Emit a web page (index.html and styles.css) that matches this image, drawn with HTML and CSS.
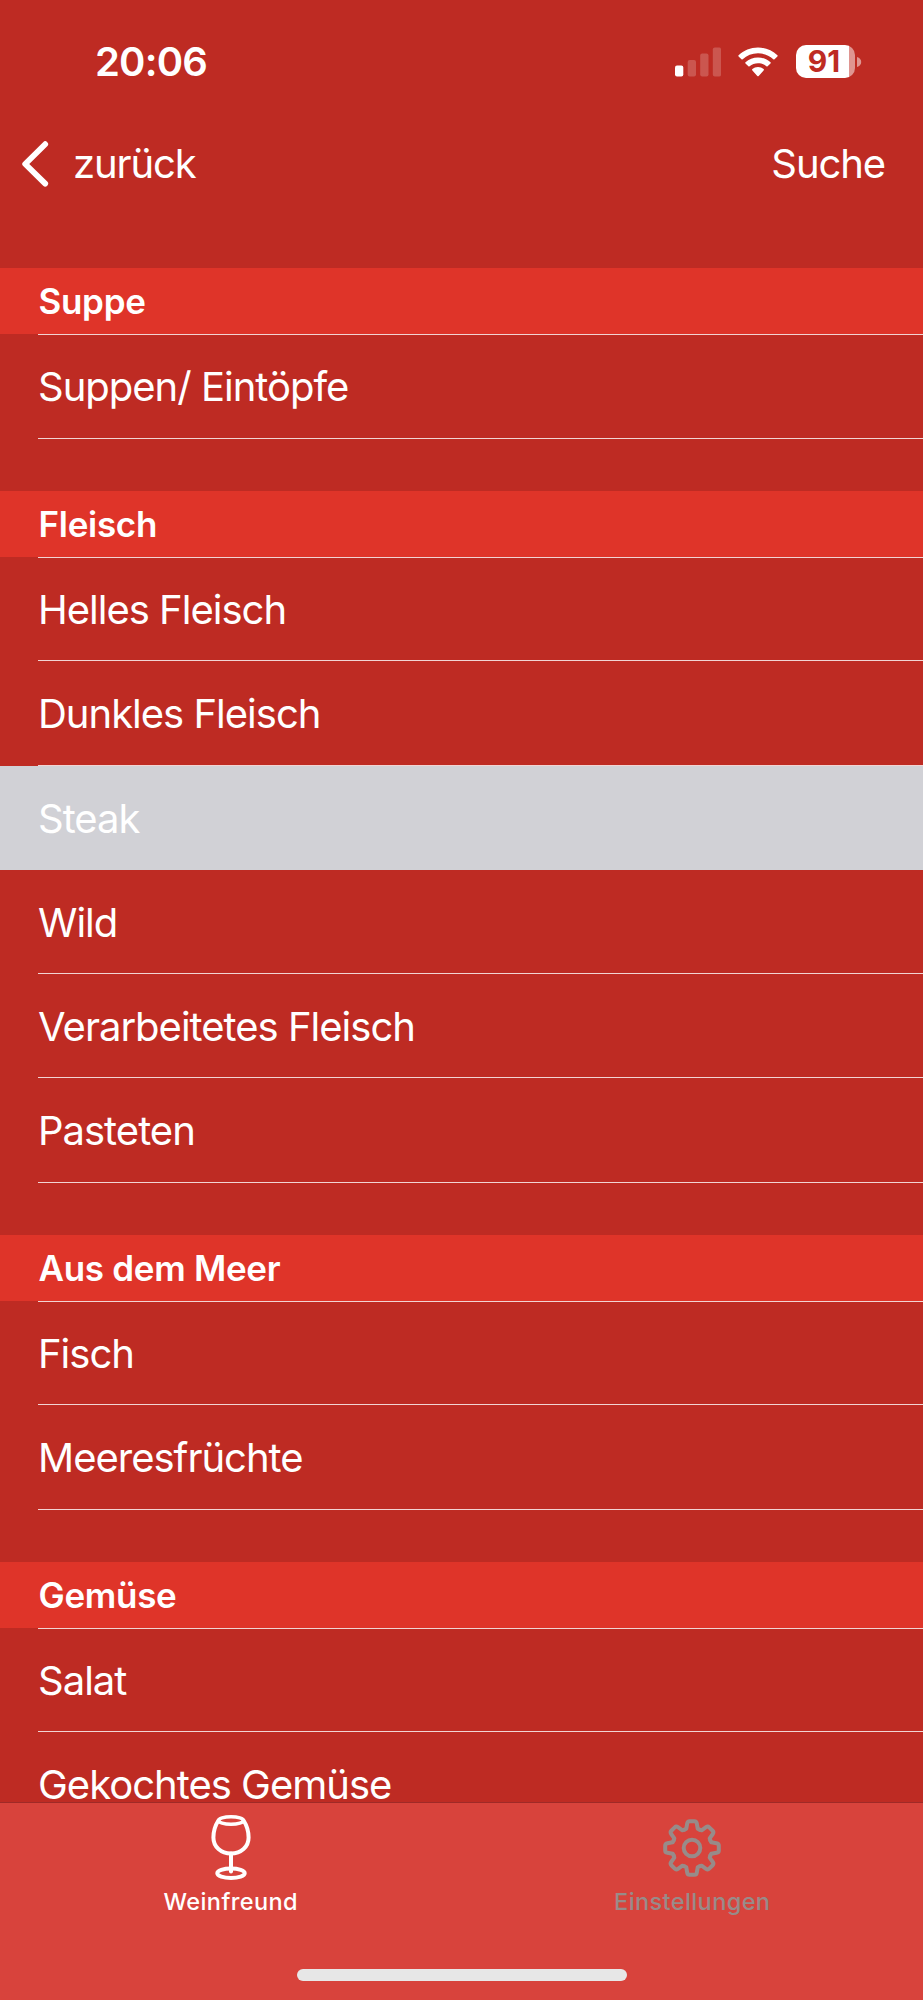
FILE: index.html
```html
<!DOCTYPE html>
<html lang="de">
<head>
    <meta charset="UTF-8">
    <meta name="viewport" content="width=device-width, initial-scale=1.0">
    <title>Weinfreund</title>
    <link rel="stylesheet" href="styles.css">
</head>
<body>

<div class="app">
    <div class="status-bar">
        <span class="time">20:06</span>
        <div class="status-icons">
            <svg class="signal" width="46" height="30" viewBox="0 0 46 30" fill="#fff">
                <rect x="0" y="18.5" width="8.3" height="11" rx="2"/>
                <g opacity="0.2">
                    <rect x="12.7" y="13" width="8.3" height="16.5" rx="2"/>
                    <rect x="25.2" y="6.6" width="8.3" height="22.9" rx="2"/>
                    <rect x="37.8" y="0.5" width="8.3" height="29" rx="2"/>
                </g>
            </svg>
            <svg class="wifi" width="40" height="30" viewBox="0 0 40 30" fill="#fff">
                <path d="M20 0.5C27.5 0.5 34.3 3.4 39.4 8.2Q40 8.8 39.4 9.4L36.5 12.2Q35.9 12.7 35.3 12.2C31.2 8.4 25.9 6.3 20 6.3S8.8 8.4 4.7 12.2Q4.1 12.7 3.5 12.2L0.6 9.4Q0 8.8 0.6 8.2C5.7 3.4 12.5 0.5 20 0.5Z"/>
                <path d="M20 10.4C24.8 10.4 29.2 12.2 32.5 15.2Q33.1 15.8 32.5 16.4L29.6 19.2Q29 19.8 28.4 19.2C26.1 17.3 23.2 16.2 20 16.2S13.9 17.3 11.6 19.2Q11 19.8 10.4 19.2L7.5 16.4Q6.9 15.8 7.5 15.2C10.8 12.2 15.2 10.4 20 10.4Z"/>
                <path d="M20 20.1C22.1 20.1 24.1 20.8 25.6 22.1Q26.3 22.7 25.6 23.4L20.7 28.9Q20 29.6 19.3 28.9L14.4 23.4Q13.7 22.7 14.4 22.1C15.9 20.8 17.9 20.1 20 20.1Z"/>
            </svg>
            <div class="battery">
                <span class="battery-level">91</span>
                <svg class="battery-nub" width="5" height="10" viewBox="0 0 5 10"><path d="M0 0Q4.2 1.3 4.2 5T0 10Z" fill="#fff"/></svg>
            </div>
        </div>
    </div>

    <div class="nav-bar">
        <a class="back">
            <svg width="28" height="46" viewBox="0 0 28 46" fill="none" stroke="#fff" stroke-width="5.8" stroke-linecap="round" stroke-linejoin="round">
                <path d="M23.2 3.2L3.2 23L23.2 42.6"/>
            </svg>
            <span class="back-label">zurück</span>
        </a>
        <a class="search">Suche</a>
    </div>

    <div class="list">
        <div class="section">
            <h2 class="section-title">Suppe</h2>
            <div class="row"><div class="row-label">Suppen/ Eintöpfe</div></div>
        </div>
        <div class="section">
            <h2 class="section-title">Fleisch</h2>
            <div class="row"><div class="row-label">Helles Fleisch</div></div>
            <div class="row"><div class="row-label">Dunkles Fleisch</div></div>
            <div class="row selected"><div class="row-label">Steak</div></div>
            <div class="row"><div class="row-label">Wild</div></div>
            <div class="row"><div class="row-label">Verarbeitetes Fleisch</div></div>
            <div class="row"><div class="row-label">Pasteten</div></div>
        </div>
        <div class="section">
            <h2 class="section-title">Aus dem Meer</h2>
            <div class="row"><div class="row-label">Fisch</div></div>
            <div class="row"><div class="row-label">Meeresfrüchte</div></div>
        </div>
        <div class="section">
            <h2 class="section-title">Gemüse</h2>
            <div class="row"><div class="row-label">Salat</div></div>
            <div class="row"><div class="row-label">Gekochtes Gemüse</div></div>
        </div>
    </div>

    <div class="tab-bar">
        <div class="tabs">
            <a class="tab active">
                <svg width="44" height="68" viewBox="-22 0 44 68" fill="none" stroke="currentColor" stroke-width="4" stroke-linecap="round" stroke-linejoin="round">
                    <ellipse cx="0" cy="6.5" rx="12.5" ry="3.8" stroke-width="3.4"/>
                    <path d="M-12.6 6.5C-15.5 11-17.6 16-17.6 23.5C-17.6 33-10 39.5-0 39.5S17.6 33 17.6 23.5C17.6 16 15.5 11 12.6 6.5"/>
                    <path d="M0 39.5V57.5"/>
                    <ellipse cx="0" cy="59.3" rx="13.7" ry="4.7"/>
                </svg>
                <span class="tab-label">Weinfreund</span>
            </a>
            <a class="tab">
                <svg width="60" height="68" viewBox="-30 -34 60 68" fill="none" stroke="currentColor" stroke-width="4" stroke-linecap="round" stroke-linejoin="round">
                    <defs>
                        <path id="tooth" d="M-7.6-18.3L-5.7-19.3L-4.8-24.6Q-4.4-26.8-2.4-26.8H2.4Q4.4-26.8 4.8-24.6L5.7-19.3L7.6-18.3"/>
                    </defs>
                    <use href="#tooth"/>
                    <use href="#tooth" transform="rotate(45)"/>
                    <use href="#tooth" transform="rotate(90)"/>
                    <use href="#tooth" transform="rotate(135)"/>
                    <use href="#tooth" transform="rotate(180)"/>
                    <use href="#tooth" transform="rotate(225)"/>
                    <use href="#tooth" transform="rotate(270)"/>
                    <use href="#tooth" transform="rotate(315)"/>
                    <circle r="8.3"/>
                </svg>
                <span class="tab-label">Einstellungen</span>
            </a>
        </div>
        <div class="home-indicator"></div>
    </div>
</div>

</body>
</html>
```
FILE: styles.css
```css
* {
    box-sizing: border-box;
}
body {
    margin: 0;
    background-color: #be2b23;
    color: #fff;
    font-family: Inter, 'Liberation Sans', sans-serif;
}
.app {
    display: flex;
    flex-direction: column;
    height: 2000px;
    overflow: hidden;
}
.status-bar {
    flex: none;
    display: flex;
    justify-content: space-between;
    height: 123px;
    padding: 0 61px 0 95px;
}
.time {
    font-size: 40px;
    font-weight: 600;
    letter-spacing: -0.8px;
    line-height: 123px;
}
.status-icons {
    display: flex;
    align-items: center;
    height: 123px;
}
.wifi {
    margin-left: 17px;
}
.battery {
    display: flex;
    align-items: center;
    margin-left: 18px;
}
.battery-level {
    width: 59px;
    height: 33px;
    border-radius: 10px;
    background: linear-gradient(to right, #fff 53px, #df9591 53px);
    color: #be2b23;
    font-size: 30px;
    font-weight: 700;
    line-height: 33px;
    text-align: center;
    padding-right: 3px;
}
.battery-nub {
    margin-left: 2px;
    opacity: 0.5;
}
.nav-bar {
    flex: none;
    display: flex;
    justify-content: space-between;
    align-items: center;
    height: 81px;
    padding: 0 38px 0 22px;
    font-size: 40px;
    letter-spacing: -1.1px;
}
.back {
    display: flex;
    align-items: center;
    gap: 23px;
}
.list {
    flex: 1;
    min-height: 0;
    overflow: hidden;
    padding-top: 64px;
}
.section {
    margin-bottom: 52.2px;
}
.section-title {
    margin: 0;
    height: 66.3px;
    padding-left: 38.5px;
    background-color: #df3429;
    font-size: 35px;
    font-weight: 600;
    letter-spacing: -0.3px;
    line-height: 66px;
}
.row {
    height: 104.25px;
    padding-left: 38px;
}
.row-label {
    height: 100%;
    border-bottom: 1px solid rgba(255, 255, 255, 0.8);
    font-size: 40px;
    letter-spacing: -1px;
    line-height: 106px;
}
.section-title + .row .row-label {
    border-top: 1px solid rgba(255, 255, 255, 0.8);
    line-height: 104px;
}
.row.selected {
    background-color: #d1d1d6;
}
.row.selected .row-label {
    border-bottom-color: transparent;
}
.tab-bar {
    flex: none;
    height: 198px;
    border-top: 1px solid #9f2a27;
    background-color: #d8433c;
}
.tabs {
    display: flex;
    height: 166px;
}
.tab {
    flex: 1;
    display: flex;
    flex-direction: column;
    align-items: center;
    padding-top: 11px;
    color: #988b89;
}
.tab.active {
    color: #fff;
}
.tab-label {
    margin-top: 6px;
    font-size: 23.5px;
    font-weight: 500;
    letter-spacing: 0.4px;
    line-height: 28px;
}
.home-indicator {
    width: 330px;
    height: 12px;
    margin: 0 auto;
    border-radius: 6px;
    background-color: #e7e7e7;
}
```
